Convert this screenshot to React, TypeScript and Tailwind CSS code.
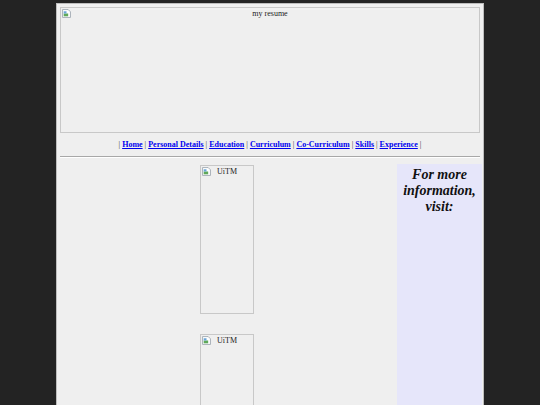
import React from 'react';

function BrokenIcon() {
  return (
    <svg width="9" height="9" viewBox="0 0 16 16" className="shrink-0">
      <path d="M1 1h10l4 4v10H1z" fill="#fff" stroke="#9aa4ad" strokeWidth="1.5" />
      <rect x="3" y="8" width="8" height="5" fill="#5fa85a" />
      <rect x="3" y="4" width="5" height="4" fill="#6aa6d8" />
    </svg>
  );
}

function BrokenImage({ alt, className }: { alt: string; className: string }) {
  return (
    <div className={`relative border border-[#c8c8c8] ${className}`}>
      <div className="absolute left-[1px] top-[1px]">
        <BrokenIcon />
      </div>
      <p className="text-center text-[8px] leading-[10px] pt-[1px] text-[#222]">{alt}</p>
    </div>
  );
}

const links = ['Home', 'Personal Details', 'Education', 'Curriculum', 'Co-Curriculum', 'Skills', 'Experience'];

export default function App() {
  return (
    <div
      className="w-[540px] h-[405px] overflow-hidden bg-[#232323] pt-[3px]"
      style={{ fontFamily: '"Liberation Serif", "Times New Roman", serif' }}
    >
      <div className="mx-auto w-[428px] h-[420px] bg-[#efefef] border border-[#bdbdbd] px-[3px] pt-[3px]">
        {/* banner */}
        <BrokenImage alt="my resume" className="w-[420px] h-[126px] mx-auto" />

        {/* nav */}
        <p className="text-center text-[8px] text-[#333] mt-[6px] leading-[12px]">
          |{' '}
          {links.map((l) => (
            <React.Fragment key={l}>
              <a href="#" className="font-bold text-[#0000ee] underline">
                {l}
              </a>{' '}
              |{' '}
            </React.Fragment>
          ))}
        </p>

        <div className="mx-auto w-[420px] mt-[5px] border-t border-t-[#a8a8a8] border-b border-b-[#ffffff]" />

        {/* body */}
        <div className="flex mt-[6px]">
          <div className="flex-1 flex flex-col items-center pt-[1px] pr-[3px] gap-[20px]">
            <BrokenImage alt="UiTM" className="w-[54px] h-[149px]" />
            <BrokenImage alt="UiTM" className="w-[54px] h-[149px]" />
          </div>
          <div className="w-[85px] mr-[-2px] h-[260px] bg-[#e6e6fa] pt-[3px]">
            <h2 className="text-center italic font-bold text-[14px] leading-[16px] text-[#111]">
              For more information, visit:
            </h2>
          </div>
        </div>
      </div>
    </div>
  );
}
